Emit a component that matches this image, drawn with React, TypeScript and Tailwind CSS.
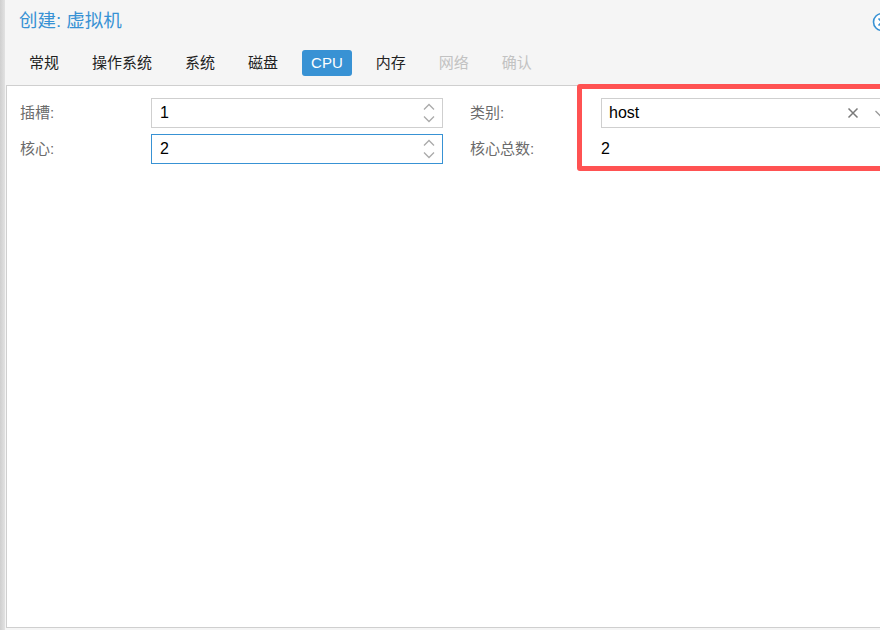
import { ReactNode } from 'react';

const TABS = [
  { label: '常规', state: 'normal' },
  { label: '操作系统', state: 'normal' },
  { label: '系统', state: 'normal' },
  { label: '磁盘', state: 'normal' },
  { label: 'CPU', state: 'active' },
  { label: '内存', state: 'normal' },
  { label: '网络', state: 'disabled' },
  { label: '确认', state: 'disabled' },
];

const FONT = { fontFamily: '"Liberation Sans", "Noto Sans CJK SC", sans-serif' };

function Spinner() {
  return (
    <svg width="12" height="26" viewBox="0 0 12 26" className="shrink-0">
      <path d="M1 9.5 L6 4.5 L11 9.5" fill="none" stroke="#aaaaaa" strokeWidth="1.3" />
      <path d="M1 16.5 L6 21.5 L11 16.5" fill="none" stroke="#aaaaaa" strokeWidth="1.3" />
    </svg>
  );
}

function NumberField({ value, focused }: { value: string; focused?: boolean }) {
  return (
    <div
      className={`w-[292px] h-[30px] flex items-center justify-between pl-[8px] pr-[7px] bg-white border ${
        focused ? 'border-[#3892d4]' : 'border-[#cfcfcf]'
      }`}
    >
      <span className="text-[16px] text-black">{value}</span>
      <Spinner />
    </div>
  );
}

function Row({ label, children }: { label: string; children: ReactNode }) {
  return (
    <div className="flex items-center h-[30px]">
      <div className="w-[131px] shrink-0 text-[15px] text-[#6b6b6b] pt-[1px]">{label}</div>
      {children}
    </div>
  );
}

export default function App() {
  return (
    <div className="relative w-[880px] h-[630px] overflow-hidden flex bg-[#f5f5f5]" style={FONT}>
      {/* left edge of the window behind */}
      <div className="w-[5px] shrink-0 bg-gradient-to-r from-[#cfcfcf] to-[#e2e2e2]" />

      <div className="flex-1 flex flex-col min-w-0">
        {/* header */}
        <div className="h-[42px] shrink-0 flex items-center justify-between pl-[14px]">
          <span className="text-[18.5px] text-[#3892d4]">创建: 虚拟机</span>
          <svg width="22" height="22" viewBox="0 0 22 22" className="mr-[-13px] mt-[1px] shrink-0">
            <circle cx="11" cy="11" r="8.5" fill="white" stroke="#3892d4" strokeWidth="1.6" />
            <path d="M7.5 7.5 L14.5 14.5 M14.5 7.5 L7.5 14.5" stroke="#3892d4" strokeWidth="1.6" />
          </svg>
        </div>

        {/* tabs */}
        <div className="h-[43px] shrink-0 flex items-start pt-[8px] pl-[15px] gap-[15px]">
          {TABS.map((t) => (
            <div
              key={t.label}
              className={`h-[26px] flex items-center px-[9px] rounded-[3px] text-[15px] ${
                t.state === 'active'
                  ? 'bg-[#3892d4] text-white'
                  : t.state === 'disabled'
                  ? 'text-[#c2c2c2]'
                  : 'text-[#222]'
              }`}
            >
              {t.label}
            </div>
          ))}
        </div>

        {/* panel */}
        <div className="flex-1 ml-[1px] mb-[2px] bg-white border-l border-t border-b border-[#cfcfcf] pt-[12px] pl-[13px] flex gap-[27px] min-w-0">
          <div className="flex flex-col gap-[6px] shrink-0">
            <Row label="插槽:">
              <NumberField value="1" />
            </Row>
            <Row label="核心:">
              <NumberField value="2" focused />
            </Row>
          </div>
          <div className="flex flex-col gap-[6px] shrink-0">
            <Row label="类别:">
              <div className="w-[292px] h-[30px] flex items-center justify-between pl-[7px] pr-[6px] bg-white border border-[#cfcfcf]">
                <span className="text-[16px] text-black">host</span>
                <div className="flex items-center gap-[15px]">
                  <svg width="12" height="12" viewBox="0 0 12 12">
                    <path d="M1.5 1.5 L10.5 10.5 M10.5 1.5 L1.5 10.5" stroke="#7a7a7a" strokeWidth="1.5" />
                  </svg>
                  <svg width="12" height="12" viewBox="0 0 12 12">
                    <path d="M1.5 4 L6 8.5 L10.5 4" fill="none" stroke="#9a9a9a" strokeWidth="1.3" />
                  </svg>
                </div>
              </div>
            </Row>
            <Row label="核心总数:">
              <span className="text-[16px] text-black">2</span>
            </Row>
          </div>
        </div>
      </div>

      {/* red annotation box */}
      <div className="absolute left-[577px] top-[84px] w-[320px] h-[87px] border-[5px] border-[#ff5252] rounded-[3px] pointer-events-none" />
    </div>
  );
}
